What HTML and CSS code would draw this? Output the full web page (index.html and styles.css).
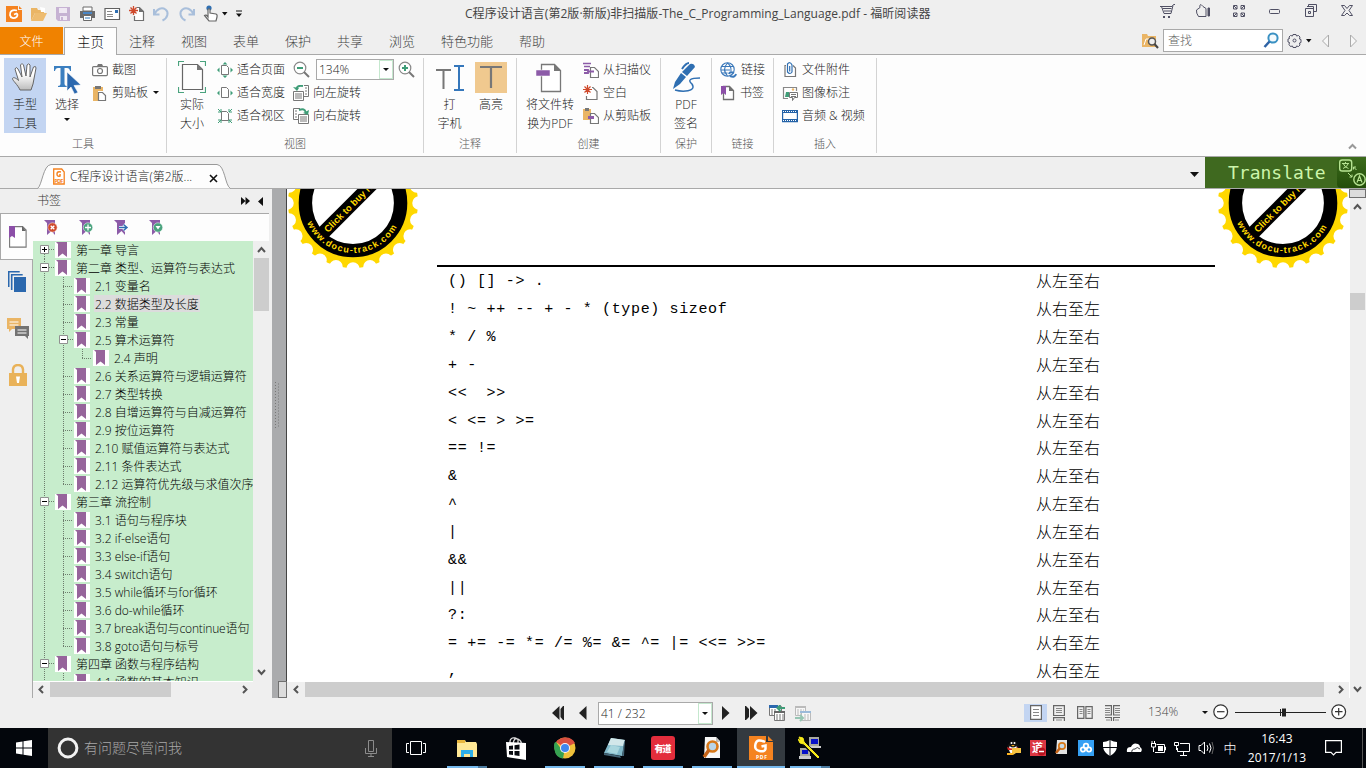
FILE: index.html
```html
<!DOCTYPE html>
<html lang="zh-CN">
<head>
<meta charset="utf-8">
<title>C程序设计语言 - 福昕阅读器</title>
<link rel="stylesheet" href="styles.css">
</head>
<body>
<svg class="defs" width="0" height="0">
  <defs>
    <!-- tree guides -->
    <symbol id="g-v" viewBox="0 0 19 18"><path class="dot" d="M9.5 0V18"/></symbol>
    <symbol id="g-t" viewBox="0 0 19 18"><path class="dot" d="M9.5 0V18M9 9.5H19"/></symbol>
    <symbol id="g-l" viewBox="0 0 19 18"><path class="dot" d="M9.5 0V9M9 9.5H19"/></symbol>
    <symbol id="g-plus" viewBox="0 0 19 18"><path class="dot" d="M9.5 13V18M14 8.5H19"/><path d="M5.500 4.500h8v8h-8z" fill="#fff" stroke="#919191"/><path d="M7 8.500h5M9.500 6v5" stroke="#000"/></symbol>
    <symbol id="g-minus" viewBox="0 0 19 18"><path class="dot" d="M9.500 0V18M14 8.500H19"/><path d="M5.500 4.500h8v8h-8z" fill="#fff" stroke="#919191"/><path d="M7 8.500h5" stroke="#000"/></symbol>
    <symbol id="bm" viewBox="0 0 16 18"><path d="M0 1h16v16H0z" fill="#fff"/><path d="M1 1h11v15L7.500 12.500 3 16V3z" fill="#96649b"/></symbol>
    <symbol id="page" viewBox="0 0 16 16"><path d="M3.500 1.500h6l4 4v9h-10z" fill="#fff" stroke="#707070" stroke-width="1.300"/><path d="M9 1v5h5" fill="#707070"/></symbol>
    <symbol id="flag" viewBox="0 0 17 17"><path d="M1 1h11v15l-3.500-4L4 16V4z" fill="#8c5ba8"/></symbol>
    <symbol id="gear24" viewBox="-65 -14 130 80">
      <circle r="65" fill="#ffd800"/>
      <circle r="66" fill="none" stroke="#fff" stroke-width="13.500" stroke-linecap="round" pathLength="24" stroke-dasharray="0 1"/>
      <circle r="47.600" fill="#fff" stroke="#000" stroke-width="13.400"/>
      <g transform="rotate(-45)">
        <path d="M-44-6.800h88v13.600h-88z"/>
        <text class="seal" x="-39" y="3.500" font-size="9.500" textLength="84">Click to buy NOW!</text>
      </g>
      <path id="arc" d="M-45.800 20A50 50 0 0 0 45.800 20" fill="none"/>
      <text class="seal" font-size="9" textLength="111"><textPath href="#arc" textLength="111">www.docu-track.com</textPath></text>
    </symbol>
  </defs>
</svg>

<header class="titlebar">
  <div class="quick">
    <svg width="16" height="16"><path d="M0 0h12v4h4v12H0z" fill="#f5821f"/><path d="M13 0l3 3h-3z" fill="#f5821f"/><path d="M11 4.500C6 3 3.500 6 4 9s4 4 6.500 2c1.500-1.500 1-3 0-3.500L8 8.500" fill="none" stroke="#fff" stroke-width="1.800"/></svg>
    <svg width="18" height="16"><path d="M1 2h6l1 2h6v3H5l-4 8z" fill="#eab565"/><path d="M5 7h12l-4 8H1z" fill="#eebc70"/><path d="M10 1l5 1v4h-4z" fill="#fff"/></svg>
    <svg width="15" height="16"><path d="M0 1h14v14H2l-2-2z" fill="#c6b2d3"/><path d="M3 2h8v5H3zM4 10h7v4H4z" fill="#efe8f3"/><path d="M5 11h2v3H5z" fill="#c6b2d3"/></svg>
    <svg width="17" height="16"><path d="M4 1h9v4H4z" fill="#fff" stroke="#6a6a6a"/><path d="M1 5h15v7H1z" fill="#6a6a6a"/><path d="M4 6h9v2H4z" fill="#4a86c5"/><path d="M4.500 9.500h8v5h-8z" fill="#fff" stroke="#6a6a6a"/><path d="M6 12h5" stroke="#2f77b8"/></svg>
    <svg width="17" height="16"><path d="M1 2.500h14.500v11H1z" fill="#fff" stroke="#606060" stroke-width="1.200"/><path d="M3 5.500h5M3 8.500h6M3 10.500h6" stroke="#888"/><path d="M11 4h3v3h-3z" fill="#2f6fb2"/></svg>
    <svg width="16" height="16"><path d="M7.500 1.500h3l4 4v9h-9V10" fill="#fff" stroke="#707070" stroke-width="1.200"/><path d="M10 1v5h5z" fill="#707070"/><path d="M4.500 0v9M0 4.500h9M1.500 1.500l6 6M7.500 1.500l-6 6" stroke="#cf4a2c" stroke-width="1.300"/></svg>
    <svg width="17" height="16"><path d="M1 3v5.500h5.500" fill="none" stroke="#a9bfdb" stroke-width="2"/><path d="M1.500 8C4 2.500 9 1 12.500 3.500S15 12 9.500 14.500" fill="none" stroke="#a9bfdb" stroke-width="2"/></svg>
    <svg width="17" height="16"><path d="M16 3v5.500h-5.500" fill="none" stroke="#a9bfdb" stroke-width="2"/><path d="M15.500 8C13 2.500 8 1 4.500 3.500S2 12 7.500 14.500" fill="none" stroke="#a9bfdb" stroke-width="2"/></svg>
    <svg width="16" height="17"><circle cx="6" cy="3" r="2.600" fill="#2f6fb2"/><path d="M5 10V4.500q1-1.500 2 0V8l6 1q1.500.5 1 3l-1 4H6L1.500 10.500Q3 9 5 12z" fill="#fff" stroke="#666" stroke-width="1.200"/></svg>
    <svg class="tight" width="6" height="4"><path d="M0 0h5.500L2.750 3.500z" fill="#111"/></svg>
    <svg width="6" height="8"><path d="M0 1h6" stroke="#111"/><path d="M0 3.500h6L3 7z" fill="#111"/></svg>
  </div>
  <div class="apptitle">C程序设计语言(第2版·新版)非扫描版-The_C_Programming_Language.pdf - 福昕阅读器</div>
  <div class="winbtns">
    <svg width="16" height="16" fill="none" stroke="#505064"><path d="M1 3.500h12l1.500-2H16M2.500 3.500l2.500 7h7l2-8M3.500 5.500h9M5 8h7"/><path d="M4 13h2v2H4zM9 13h2v2H9z" fill="#505064" stroke="none"/></svg>
    <svg width="16" height="16" fill="none" stroke="#505064"><path d="M3.500 13.500Q1 10 1.500 7L5 4.500Q4 2 6 1.500l2 2 3 2v8z"/><path d="M13 5h1.500v8H13z" fill="#505064"/></svg>
    <svg width="16" height="16" fill="none" stroke="#505064"><path d="M2.500 2.500H6V6H2.500zM10 2.500h3.500V6H10zM2.500 10H6v3.500H2.500zM10 10h3.500v3.500H10zM3 3l3 3M13 3l-3 3M3 13l3-3M13 13l-3-3"/></svg>
    <svg width="16" height="16" fill="none" stroke="#505064"><rect x="2.500" y="6.500" width="10" height="4" rx="1"/></svg>
    <svg width="16" height="16" fill="none" stroke="#505064"><path d="M5.500 4V1.500h8v7H11M2.500 5.500h8v8h-8zM5.500 8.500h2v2h-2z"/><path d="M4 3.500h6.500V10"/></svg>
    <svg width="16" height="16" fill="none" stroke="#505064"><path d="M2.500 2.500h3l2.500 3 2.500-3h3l-3.500 5 3.500 5h-3L8 10l-2.500 2.500h-3l3.500-5z"/></svg>
  </div>
</header>

<nav class="tabs">
  <span class="file">文件</span><span class="tab on">主页</span>
  <span class="tab">注释</span><span class="tab">视图</span><span class="tab">表单</span><span class="tab">保护</span><span class="tab">共享</span><span class="tab">浏览</span><span class="tab wide">特色功能</span><span class="tab">帮助</span>
  <div class="find">
    <svg width="17" height="16"><path d="M0 1h5l1 2h8v11H0z" fill="#eab565"/><path d="M2 12l2-6h9" stroke="#fff" fill="none"/><circle cx="10" cy="8.500" r="3.500" fill="#efefef" stroke="#555" stroke-width="1.500"/><path d="M12.500 11l3.500 4" stroke="#444" stroke-width="2"/></svg>
    <div class="searchbox"><span>查找</span><svg width="16" height="17"><circle cx="10" cy="6" r="4.600" fill="#f4fafd" stroke="#3a91c3" stroke-width="2"/><path d="M6.500 9.500L1.500 15" stroke="#2e63a5" stroke-width="2.500"/></svg></div>
    <svg width="15" height="15" fill="none" stroke="#505064"><path d="M6 1.500h3l.5 1.500 2-.5 1.500 1.500-.5 2 1.500.5v3l-1.500.5.500 2-1.500 1.500-2-.5-.5 1.500H6l-.5-1.500-2 .5L2 11.500l.5-2L1 9V6l1.500-.5L2 4l1.500-1.500 2 .5z"/><circle cx="7.500" cy="7.500" r="1.500"/></svg>
    <svg class="c1" width="6" height="4"><path d="M0 0h5.500L2.750 3.500z" fill="#111"/></svg>
    <svg class="c2" width="9" height="14"><path d="M7.500 1v12l-6-6z" fill="#f7f7f7" stroke="#aaa"/></svg>
    <svg class="c3" width="9" height="14"><path d="M1.500 1v12l6-6z" fill="#f7f7f7" stroke="#aaa"/></svg>
  </div>
</nav>

<section class="ribbon">
  <div class="grp g-tools">
    <div class="cmds">
      <div class="big sel"><svg width="28" height="32"><defs><linearGradient id="hg" x2="0" y2="1"><stop offset=".4" stop-color="#fff"/><stop offset="1" stop-color="#bcbcbc"/></linearGradient></defs><path d="M9 28C7 23 1 18 1.500 16.500s3-1 6 2L4 7q1-3 3 0l4 8L9.500 3q1.500-3 3 0L15 14l1-11q2-2.500 3 0v12l3.500-10q2.500-1.500 2.500 1L22 22l-2 6z" fill="url(#hg)" stroke="#666" stroke-width="1"/></svg><span>手型</span><span>工具</span></div>
      <div class="big"><svg width="28" height="32"><path d="M1 4h17v5h-1q-.5-3-3-3h-2.500v16q0 2 2.500 2v1H5v-1q2.500 0 2.500-2V6H5Q2.500 6 2 9H1z" fill="#3b7fc0"/><path d="M14 10l14 13-7 .5 4 7-3.500 1.500-3.500-7-4 4z" fill="#2b68ae" stroke="#fdfdfd" stroke-width=".6"/></svg><span>选择</span><i class="dn"></i></div>
      <div class="col">
        <div class="cmd"><svg width="16" height="16"><rect x=".6" y="4.600" width="14.800" height="9" rx="1" fill="#fff" stroke="#777" stroke-width="1.200"/><path d="M5 4l1-2h4l1 2z" fill="#777"/><circle cx="8" cy="9" r="2.500" fill="none" stroke="#777" stroke-width="1.200"/></svg>截图</div>
        <div class="cmd"><svg width="16" height="16"><path d="M1 2h10v4H6v10H1z" fill="#eab565"/><path d="M3 1h6v3H3z" fill="#777"/><path d="M6.500 7.500h4l3 3v5h-7z" fill="#fff" stroke="#777" stroke-width="1.200"/></svg>剪贴板<i class="dn"></i></div>
      </div>
    </div><div class="glabel">工具</div>
  </div>
  <div class="grp g-view">
    <div class="cmds">
      <div class="big"><svg width="28" height="32" fill="none"><path d="M.5 5V.5H6M22 .5h5.500V5M.5 26v5.500H6M22 31.500h5.500V26" stroke="#4aa37e" stroke-width="1.200"/><path d="M4.500 3.500h15l5 5v20h-20z" stroke="#666" stroke-width="1.200"/><path d="M19 3v6h6z" fill="#777"/></svg><span>实际</span><span>大小</span></div>
      <div class="col">
        <div class="cmd"><svg width="16" height="16"><path d="M4.500 3.500h5l2 2v7h-7z" fill="#fff" stroke="#777"/><path d="M8 0l2.500 2.500h-5zM8 16l2.500-2.500h-5zM0 8l2.500-2.500v5zM16 8l-2.500-2.500v5z" fill="#3f9d78"/></svg>适合页面</div>
        <div class="cmd"><svg width="16" height="16"><path d="M4.500 2.500h5l2 2v8h-7z" fill="#fff" stroke="#777"/><path d="M0 8l2.500-2.500v5zM16 8l-2.500-2.500v5z" fill="#3f9d78"/></svg>适合宽度</div>
        <div class="cmd"><svg width="16" height="16"><path d="M4.500 3.500h5l2 2v7h-7z" fill="#fff" stroke="#777"/><path d="M1 1l3 3M1 4h3V1M15 1l-3 3M15 4h-3V1M1 15l3-3M1 12h3v3M15 15l-3-3M15 12h-3v3" stroke="#3f9d78" fill="none"/></svg>适合视区</div>
      </div>
      <div class="col zoomcol">
        <div class="cmd zrow"><svg width="17" height="17"><circle cx="7" cy="7" r="5.800" fill="#fff" stroke="#888" stroke-width="1.200"/><path d="M4 7h6" stroke="#3f9d78" stroke-width="2"/><path d="M11 11l5 5" stroke="#777" stroke-width="2"/></svg><div class="combo"><span>134%</span><b><i class="dn"></i></b></div><svg width="17" height="17"><circle cx="7" cy="7" r="5.800" fill="#fff" stroke="#888" stroke-width="1.200"/><path d="M4 7h6M7 4v6" stroke="#3f9d78" stroke-width="2"/><path d="M11 11l5 5" stroke="#777" stroke-width="2"/></svg></div>
        <div class="cmd"><svg width="16" height="16"><path d="M11 .5h4.500v11H11M.5 6.500h10v9H.500z" fill="#fff" stroke="#777"/><path d="M2 9h7M2 11h7M2 13h7M12 3h2M12 6h2M12 9h2" stroke="#777"/><path d="M10 1Q4 0 3.500 4" fill="none" stroke="#3f9d78" stroke-width="2"/><path d="M0 2l6 1-2 3z" fill="#3f9d78"/></svg>向左旋转</div>
        <div class="cmd"><svg width="16" height="16"><path d="M5 11.500H.500V.500H7M5.500 6.500h10v9h-10z" fill="#fff" stroke="#777"/><path d="M7 9h7M7 11h7M7 13h7M2 3h2M2 6h2M2 9h2" stroke="#777"/><path d="M6 2Q12 0 12.500 4" fill="none" stroke="#3f9d78" stroke-width="2"/><path d="M16 2l-1 5-5-2z" fill="#3f9d78"/></svg>向右旋转</div>
      </div>
    </div><div class="glabel">视图</div>
  </div>
  <div class="grp g-note">
    <div class="cmds">
      <div class="big"><svg width="28" height="32"><path d="M0 8h15M7.500 8v19" stroke="#777" stroke-width="2"/><path d="M18 4h10M18 28h10M23 4v24" stroke="#3577bb" stroke-width="2"/></svg><span>打</span><span>字机</span></div>
      <div class="big hl"><svg width="32" height="32"><path d="M0 0h32v31H0z" fill="#f0c98f"/><path d="M5 5h22M16 5v21" stroke="#777" stroke-width="2.200"/></svg><span>高亮</span></div>
    </div><div class="glabel">注释</div>
  </div>
  <div class="grp g-create">
    <div class="cmds">
      <div class="big"><svg width="28" height="32"><path d="M5.500 2.500h13l6 6v21h-19z" fill="#fff" stroke="#777" stroke-width="1.300"/><path d="M18 2l7 7h-7z" fill="#777"/><path d="M0 8h14v6H0z" fill="#8c5ba8" stroke="#fff" stroke-width=".5"/></svg><span>将文件转</span><span>换为PDF</span></div>
      <div class="col">
        <div class="cmd"><svg width="16" height="16"><path d="M7.500 5.500h4l4 4v6h-8z" fill="#fff" stroke="#777" stroke-width="1.200"/><path d="M0 1.500h8M1 4.500h6" stroke="#8c5ba8" stroke-width="1.300"/><path d="M1 8h4v3H1M5 9.500h6" stroke="#8c5ba8" stroke-width="1.800" fill="none"/></svg>从扫描仪</div>
        <div class="cmd"><svg width="16" height="16"><path d="M9 2.500h1l4 4v8H3.500V11" fill="#fff" stroke="#777" stroke-width="1.200"/><path d="M4.500 0v9M0 4.500h9M1.500 1.500l6 6M7.500 1.500l-6 6" stroke="#cf4a2c" stroke-width="1.200"/></svg>空白</div>
        <div class="cmd"><svg width="16" height="16"><path d="M0 1h8v11H0z" fill="#eab565"/><path d="M7.500 5.500h4l4 4v6h-8z" fill="#fff" stroke="#777" stroke-width="1.200"/><path d="M2 0h4v3H2z" fill="#777"/><path d="M5 8h6v3H5z" fill="#8c5ba8"/></svg>从剪贴板</div>
      </div>
    </div><div class="glabel">创建</div>
  </div>
  <div class="grp g-sign">
    <div class="cmds">
      <div class="big"><svg width="30" height="33"><path d="M11 8q4-6 7-6" stroke="#2f6fb2" stroke-width="2" fill="none"/><path d="M19 3q4-1 5 3l-8 9-5-4zM10 12l5 4-6 7-7 5 2-7z" fill="#2f6fb2"/><path d="M29 17q-15 0-8 6c5 8-10 8-17 6" fill="none" stroke="#2f6fb2" stroke-width="1.500"/></svg><span>PDF</span><span>签名</span></div>
    </div><div class="glabel">保护</div>
  </div>
  <div class="grp g-link">
    <div class="cmds"><div class="col">
      <div class="cmd"><svg width="17" height="16" fill="none" stroke="#3a78ba" stroke-width="1.100"><circle cx="7.500" cy="7.500" r="6.700"/><path d="M1.500 4.500h12M1 8h9M1.500 11h6M7.500 1q-6 6.500 0 13M7.500 1q4 3 3.500 8"/><path d="M9 12q1-3 5-1M16 12q-1 4-6 2" stroke-width="2"/></svg>链接</div>
      <div class="cmd"><svg width="16" height="16"><use href="#page"/><path d="M1 1h5v9L3.500 8 1 10z" fill="#8c4fa8"/></svg>书签</div>
    </div></div><div class="glabel">链接</div>
  </div>
  <div class="grp g-ins">
    <div class="cmds"><div class="col">
      <div class="cmd"><svg width="16" height="16"><path d="M4 3.500H3v11h10.500V6L11 3.500" fill="#fff" stroke="#777" stroke-width="1.200"/><path d="M5.500 5v5q2.500 3 4.500 0V3Q8-1 5.500 2v3M7.700 4v5.500" fill="none" stroke="#2f6fb2" stroke-width="1.200"/></svg>文件附件</div>
      <div class="cmd"><svg width="16" height="16"><path d="M6 13.500H1.500v-11h13V6" fill="#fff" stroke="#888" stroke-width="1.200"/><path d="M3 12l1-5h3v5z" fill="#3f9d78"/><circle cx="11" cy="4.500" r="1.200" fill="#eab565"/><path d="M7.500 7.500h8v5h-3l-2 3v-3h-3z" fill="#fff" stroke="#777"/><path d="M9 9.500h5M9 11.500h5" stroke="#777"/></svg>图像标注</div>
      <div class="cmd"><svg width="16" height="16"><path d="M.6 2.600h14.800v11H.600z" fill="#fff" stroke="#2563a8" stroke-width="1.200"/><path d="M0 3.500h16M0 12.500h16" stroke="#2563a8" stroke-width="3"/><path d="M1 3.500h14M1 12.500h14" stroke="#fff" stroke-dasharray="1 1"/></svg>音频 &amp; 视频</div>
    </div></div><div class="glabel">插入</div>
  </div>
  <svg class="collapse" width="9" height="7"><path d="M1 5.500l3.500-3.500L8 5.500" fill="none" stroke="#999" stroke-width="2"/></svg>
</section>

<section class="doctabs">
  <div class="doctab">
    <svg class="shape" width="194" height="25"><path d="M.500 24.500C5 22 6 1 14 .500H180C188 1 188 22 193.500 24.500" fill="#fdfdfd" stroke="#999"/></svg>
    <svg class="ico" width="12" height="17"><path d="M.700 1h8l2.500 3v12H.700z" fill="#fff" stroke="#f5821f" stroke-width="1.300"/><path d="M8 4q-4-1-4 2t3 2V6" fill="none" stroke="#f5821f" stroke-width="1.500"/><text x="1.200" y="14.500" font-size="5.500" font-weight="bold" fill="#f5821f" textLength="9">PDF</text></svg>
    <span>C程序设计语言(第2版...</span>
    <svg class="x" width="9" height="9"><path d="M1 1l7 7M8 1L1 8" stroke="#111" stroke-width="1.600"/></svg>
  </div>
  <svg class="more" width="9" height="5"><path d="M0 0h9L4.500 5z" fill="#111"/></svg>
  <div class="translate"><span>Translate</span>
    <svg width="29" height="31"><defs><linearGradient id="tg" x2="0" y2="1"><stop stop-color="#3c6b1c"/><stop offset="1" stop-color="#234d0a"/></linearGradient></defs><path d="M4 0h25v31H4q-4 0-4-4V4q0-4 4-4z" fill="url(#tg)"/><g fill="none" stroke="#b6e392"><rect x="2.700" y="3" width="12" height="11" rx="2.500" stroke-width="1.400"/><path d="M5 6.500h7M8.500 5v1.500M6.500 7q1 3 5 4.500M11 7q-1 3-5 4.500" /><circle cx="22.500" cy="22.500" r="5.700" stroke-width="1.400"/><path d="M20 25.500l2.500-6.500 2.500 6.500M21 23.500h3" stroke-width="1.200"/><path d="M16.500 10l3 3M16.500 12.500V10H19M11 16l4 4M15 17.500V20h-2.500"/></g></svg>
  </div>
</section>

<main class="work">
  <aside class="side">
    <div class="shead"><span>书签</span><svg width="26" height="9"><path d="M0 0l4.500 4L0 8zM4.500 0L9 4 4.500 8zM22 0v9l-5-4.500z" fill="#111"/></svg></div>
    <div class="sbody">
      <div class="rail">
        <div class="cur"><svg width="18" height="22"><path d="M.600.600h13l3.500 3.500v17H.600z" fill="#fff" stroke="#777" stroke-width="1.100"/><path d="M0 0h6v12l-3-2-3 2z" fill="#8c4fa8"/><path d="M13 0v5h4z" fill="#666"/></svg></div>
        <svg class="r1" width="19" height="22"><path d="M.700 16V.700h11M3.700 19V3.700h11" fill="none" stroke="#2b68ae" stroke-width="1.600"/><path d="M6 6h12v15H6z" fill="#2b68ae"/></svg>
        <svg class="r2" width="22" height="22"><path d="M0 1h14v11H5l-3 3v-3H0z" fill="#eab565"/><path d="M2.500 5h9M2.500 8h9" stroke="#fff" stroke-width="1.200"/><path d="M8 9h14v10h-1v3l-3-3H8z" fill="#737373"/><path d="M10.500 13h9M10.500 16h9" stroke="#fff" stroke-width="1.200"/></svg>
        <svg class="r3" width="18" height="22"><path d="M4 10V5.500Q4.500 1 9 1t5 4.500V10" fill="none" stroke="#e9b259" stroke-width="2.400"/><path d="M0 9h18v13H0z" fill="#e9b259"/><path d="M7 12.500h4L10 19H8z" fill="#fff"/></svg>
      </div>
      <div class="panel">
        <div class="ptools">
          <svg width="17" height="17"><use href="#flag"/><circle cx="9.500" cy="8.500" r="4.700" fill="#cf4a2c" stroke="#fff" stroke-width=".5"/><path d="M7.700 6.700l3.600 3.600M11.300 6.700L7.700 10.300" stroke="#fff" stroke-width="1.300"/></svg>
          <svg width="17" height="17"><use href="#flag"/><circle cx="10" cy="8.500" r="4.700" fill="#4aa37e" stroke="#fff" stroke-width=".5"/><path d="M7 8.500h6M10 5.500v6" stroke="#fff" stroke-width="1.300"/></svg>
          <svg width="17" height="17"><use href="#flag"/><path d="M6 8.500h7M10.500 5.500l3.500 3-3.500 3" fill="none" stroke="#fff" stroke-width="3"/><path d="M6 8.500h7M10.500 5.500l3.500 3-3.500 3" fill="none" stroke="#2f6fb2" stroke-width="1.500"/></svg>
          <svg width="17" height="17"><use href="#flag"/><circle cx="10" cy="8.500" r="4.700" fill="#4aa37e" stroke="#fff" stroke-width=".5"/><path d="M7.500 7h5L10 10.500z" fill="#fff"/></svg>
        </div>
        <div class="treewrap">
          <div class="tree">
            <div class="row"><svg class="g"><use href="#g-plus"/></svg><svg class="b"><use href="#bm"/></svg><span>第一章 导言</span></div>
            <div class="row"><svg class="g"><use href="#g-minus"/></svg><svg class="b"><use href="#bm"/></svg><span>第二章 类型、运算符与表达式</span></div>
            <div class="row"><svg class="g"><use href="#g-v"/></svg><svg class="g"><use href="#g-t"/></svg><svg class="b"><use href="#bm"/></svg><span>2.1 变量名</span></div>
            <div class="row"><svg class="g"><use href="#g-v"/></svg><svg class="g"><use href="#g-t"/></svg><svg class="b"><use href="#bm"/></svg><span class="picked">2.2 数据类型及长度</span></div>
            <div class="row"><svg class="g"><use href="#g-v"/></svg><svg class="g"><use href="#g-t"/></svg><svg class="b"><use href="#bm"/></svg><span>2.3 常量</span></div>
            <div class="row"><svg class="g"><use href="#g-v"/></svg><svg class="g"><use href="#g-minus"/></svg><svg class="b"><use href="#bm"/></svg><span>2.5 算术运算符</span></div>
            <div class="row"><svg class="g"><use href="#g-v"/></svg><svg class="g"><use href="#g-v"/></svg><svg class="g"><use href="#g-l"/></svg><svg class="b"><use href="#bm"/></svg><span>2.4 声明</span></div>
            <div class="row"><svg class="g"><use href="#g-v"/></svg><svg class="g"><use href="#g-t"/></svg><svg class="b"><use href="#bm"/></svg><span>2.6 关系运算符与逻辑运算符</span></div>
            <div class="row"><svg class="g"><use href="#g-v"/></svg><svg class="g"><use href="#g-t"/></svg><svg class="b"><use href="#bm"/></svg><span>2.7 类型转换</span></div>
            <div class="row"><svg class="g"><use href="#g-v"/></svg><svg class="g"><use href="#g-t"/></svg><svg class="b"><use href="#bm"/></svg><span>2.8 自增运算符与自减运算符</span></div>
            <div class="row"><svg class="g"><use href="#g-v"/></svg><svg class="g"><use href="#g-t"/></svg><svg class="b"><use href="#bm"/></svg><span>2.9 按位运算符</span></div>
            <div class="row"><svg class="g"><use href="#g-v"/></svg><svg class="g"><use href="#g-t"/></svg><svg class="b"><use href="#bm"/></svg><span>2.10 赋值运算符与表达式</span></div>
            <div class="row"><svg class="g"><use href="#g-v"/></svg><svg class="g"><use href="#g-t"/></svg><svg class="b"><use href="#bm"/></svg><span>2.11 条件表达式</span></div>
            <div class="row"><svg class="g"><use href="#g-v"/></svg><svg class="g"><use href="#g-l"/></svg><svg class="b"><use href="#bm"/></svg><span>2.12 运算符优先级与求值次序</span></div>
            <div class="row"><svg class="g"><use href="#g-minus"/></svg><svg class="b"><use href="#bm"/></svg><span>第三章 流控制</span></div>
            <div class="row"><svg class="g"><use href="#g-v"/></svg><svg class="g"><use href="#g-t"/></svg><svg class="b"><use href="#bm"/></svg><span>3.1 语句与程序块</span></div>
            <div class="row"><svg class="g"><use href="#g-v"/></svg><svg class="g"><use href="#g-t"/></svg><svg class="b"><use href="#bm"/></svg><span>3.2 if-else语句</span></div>
            <div class="row"><svg class="g"><use href="#g-v"/></svg><svg class="g"><use href="#g-t"/></svg><svg class="b"><use href="#bm"/></svg><span>3.3 else-if语句</span></div>
            <div class="row"><svg class="g"><use href="#g-v"/></svg><svg class="g"><use href="#g-t"/></svg><svg class="b"><use href="#bm"/></svg><span>3.4 switch语句</span></div>
            <div class="row"><svg class="g"><use href="#g-v"/></svg><svg class="g"><use href="#g-t"/></svg><svg class="b"><use href="#bm"/></svg><span>3.5 while循环与for循环</span></div>
            <div class="row"><svg class="g"><use href="#g-v"/></svg><svg class="g"><use href="#g-t"/></svg><svg class="b"><use href="#bm"/></svg><span>3.6 do-while循环</span></div>
            <div class="row"><svg class="g"><use href="#g-v"/></svg><svg class="g"><use href="#g-t"/></svg><svg class="b"><use href="#bm"/></svg><span class="narrow">3.7 break语句与continue语句</span></div>
            <div class="row"><svg class="g"><use href="#g-v"/></svg><svg class="g"><use href="#g-l"/></svg><svg class="b"><use href="#bm"/></svg><span>3.8 goto语句与标号</span></div>
            <div class="row"><svg class="g"><use href="#g-minus"/></svg><svg class="b"><use href="#bm"/></svg><span>第四章 函数与程序结构</span></div>
            <div class="row"><svg class="g"><use href="#g-v"/></svg><svg class="g"><use href="#g-t"/></svg><svg class="b"><use href="#bm"/></svg><span>4.1 函数的基本知识</span></div>
          </div>
          <div class="vbar"><svg width="15" height="17"><path d="M4 11l3.500-4L11 11" fill="none" stroke="#555" stroke-width="2"/></svg><div class="thumb"></div><svg class="end" width="15" height="17"><path d="M4 6l3.500 4L11 6" fill="none" stroke="#555" stroke-width="2"/></svg></div>
        </div>
        <div class="hbar"><svg width="17" height="15"><path d="M10 4L6.500 7.500 10 11" fill="none" stroke="#555" stroke-width="2"/></svg><div class="thumb"></div><svg class="end" width="17" height="15"><path d="M7 4l3.500 3.500L7 11" fill="none" stroke="#555" stroke-width="2"/></svg></div>
      </div>
    </div>
  </aside>
  <div class="splitter"><svg width="6" height="46"><path d="M1.500 0v46M4.500 1.500v44" stroke="#777" stroke-dasharray="1 2"/></svg><div class="splitbox"></div></div>
  <div class="viewer">
    <div class="page">
      <svg class="stamp" width="130" height="80"><use href="#gear24"/></svg>
      <div class="ops">
        <div><code>() [] -&gt; .</code><span>从左至右</span></div>
        <div><code>! ~ ++ -- + - * (type) sizeof</code><span>从右至左</span></div>
        <div><code>* / %</code><span>从左至右</span></div>
        <div><code>+ -</code><span>从左至右</span></div>
        <div><code>&lt;&lt;&nbsp; &gt;&gt;</code><span>从左至右</span></div>
        <div><code>&lt; &lt;= &gt; &gt;=</code><span>从左至右</span></div>
        <div><code>== !=</code><span>从左至右</span></div>
        <div><code>&amp;</code><span>从左至右</span></div>
        <div><code>^</code><span>从左至右</span></div>
        <div><code>|</code><span>从左至右</span></div>
        <div><code>&amp;&amp;</code><span>从左至右</span></div>
        <div><code>||</code><span>从左至右</span></div>
        <div><code>?:</code><span>从左至右</span></div>
        <div><code>= += -= *= /= %= &amp;= ^= |= &lt;&lt;= &gt;&gt;=</code><span>从右至左</span></div>
        <div><code>,</code><span>从右至左</span></div>
      </div>
      <svg class="stamp" width="130" height="80"><use href="#gear24"/></svg>
    </div>
    <div class="hbar wide"><svg width="17" height="15"><path d="M10 4L6.500 7.500 10 11" fill="none" stroke="#555" stroke-width="2"/></svg><div class="thumb"></div><svg class="end" width="17" height="15"><path d="M7 4l3.500 3.500L7 11" fill="none" stroke="#555" stroke-width="2"/></svg></div>
  </div>
  <div class="vbar right"><div class="splitbox"></div><svg width="15" height="17"><path d="M4 11l3.500-4L11 11" fill="none" stroke="#555" stroke-width="2"/></svg><div class="thumb"></div><svg class="end" width="15" height="17"><path d="M4 6l3.500 4L11 6" fill="none" stroke="#555" stroke-width="2"/></svg></div>
</main>

<footer class="status">
  <div class="pager">
    <svg width="13" height="14"><path d="M7.500 0v14L0 7zM12 0v14h-1L8.500 11V3L11 0z" fill="#222"/></svg>
    <svg class="p2" width="8" height="14"><path d="M7.500 0v14L0 7z" fill="#222"/></svg>
    <div class="combo pg"><span>41 / 232</span><b><i class="dn"></i></b></div>
    <svg class="p3" width="8" height="14"><path d="M0 0v14l7.500-7z" fill="#222"/></svg>
    <svg class="p4" width="13" height="14"><path d="M0 0h1l3 3v8l-3 3H0zM5 0v14l7.500-7z" fill="#222"/></svg>
    <svg class="p5" width="17" height="17"><path d="M.500 1.500h12v9H.500z" fill="#fff" stroke="#777"/><path d="M0 1.500h9" stroke="#2b68ae" stroke-width="3"/><path d="M2 5h6M2 7h4M2 9h4" stroke="#777" stroke-dasharray="2 1"/><path d="M5.500 6.500h10v9h-10z" fill="#fff" stroke="#777"/><path d="M5 7h11" stroke="#666" stroke-width="2"/><path d="M7 10h8M7 12h8M7 14h8" stroke="#777" stroke-dasharray="2 1"/><path d="M16 3H9M11.500 0L8.500 3l3 3" fill="none" stroke="#3f9d78" stroke-width="2"/></svg>
    <svg class="p6" width="17" height="17" opacity=".5"><path d="M.500 1.500h10v9H.500z" fill="#fff" stroke="#888"/><path d="M0 2h11" stroke="#888" stroke-width="2"/><path d="M2 5h7M2 7h7M2 9h4" stroke="#888" stroke-dasharray="2 1"/><path d="M6.500 6.500h9v9h-9z" fill="#fff" stroke="#888"/><path d="M5 7h11" stroke="#4a86c5" stroke-width="2"/><path d="M9 10h6M9 12h6M9 14h6" stroke="#888" stroke-dasharray="2 1"/><path d="M0 13h7M5 10l3 3-3 3" fill="none" stroke="#3f9d78" stroke-width="2"/></svg>
  </div>
  <div class="modes">
    <span class="m on"><svg width="12" height="15"><path d="M.600.600h10.800v13.800H.600z" fill="#fff" stroke="#666" stroke-width="1.200"/><path d="M3 4.500h6M3 7.500h6M3 10.500h6" stroke="#888"/></svg></span>
    <svg width="12" height="16"><path d="M.600.600h10.800v9.900H.600zM.600 16v-3.400h10.800V16" fill="none" stroke="#666" stroke-width="1.200"/><path d="M3 3.500h6M3 5.500h6M3 7.500h6M3 15h6" stroke="#888"/></svg>
    <svg width="16" height="13"><path d="M.600.600h6.300v11.800H.600zM8.900.600h6.300v11.800H8.900z" fill="none" stroke="#666" stroke-width="1.200"/><path d="M2.500 3.500h3M2.500 5.500h3M2.500 7.500h3M10.500 3.500h3M10.500 5.500h3M10.500 7.500h3" stroke="#888"/></svg>
    <svg width="16" height="16"><path d="M0 .600h6.400v9.400H0M15 .600H8.600v9.400H15M0 12.500h6.400V16M15 12.500H8.600V16" fill="none" stroke="#666" stroke-width="1.200"/><path d="M0 3.500h5M0 5.500h5M0 7.500h5M10 3.500h5M10 5.500h5M10 7.500h5M1 15h4M10 15h4" stroke="#888"/></svg>
  </div>
  <div class="zoom"><span>134%</span><i class="dn"></i>
    <svg width="16" height="16" fill="#fff" stroke="#333" stroke-width="1.200"><circle cx="7.700" cy="7.700" r="6.900"/><path d="M4 7.700h7.500"/></svg>
    <svg class="sl" width="91" height="9"><path d="M0 4.500h91M45.500 1v7" stroke="#222"/><path d="M47 .500h4v8h-4z" fill="#222"/></svg>
    <svg width="16" height="16" fill="#fff" stroke="#333" stroke-width="1.200"><circle cx="7.700" cy="7.700" r="6.900"/><path d="M4 7.700h7.500M7.700 4v7.500"/></svg>
  </div>
</footer>

<div class="taskbar">
  <div class="start"><svg width="16" height="16"><path d="M0 2.500L6.500 1.500v6H0zM7.500 1.300L16 0v7.500H7.500zM0 8.500h6.500v6L0 13.500zM7.500 8.500H16V16l-8.500-1.300z" fill="#fff"/></svg></div>
  <div class="ask"><svg width="22" height="22"><circle cx="11" cy="11" r="8.900" fill="none" stroke="#f2f2f2" stroke-width="3"/></svg><span>有问题尽管问我</span><svg class="mic" width="12" height="17" fill="none" stroke="#8c8c8c"><path d="M3.500.500h5v11h-5zM.500 8v5.500h11V8M6 14v2.500M3 16.500h6"/></svg></div>
  <div class="apps">
    <div class="app tv"><svg width="20" height="14" fill="none" stroke="#fff"><path d="M4.500.500h11v13h-11zM3 2.500H.500v9H3M17 2.500h2.500v9H17"/></svg></div>
    <div class="app run multi"><svg width="22" height="19"><path d="M1 1h8l1 2h10l1 2v13H1z" fill="#ffe795"/><path d="M1 1h8v3H1z" fill="#e9b63d"/><path d="M5 18v-7h12v7h-3v-3H8v3z" fill="#2eaee8"/></svg></div>
    <div class="app"><svg width="22" height="24"><path d="M5 8V5q1-4 5-3t3 3v3M8 8Q9 1 13 3t3 5" fill="none" stroke="#ddd" stroke-width="1.300"/><path d="M1 6l20 1v17L2 21z" fill="#fff"/><path d="M4 10l4-.5v4H4zM9.500 9.300l5-.8v5h-5zM4 15h4v4l-4-.5zM9.500 15h5v5l-5-.8z" fill="#070a10"/></svg></div>
    <div class="app run"><svg width="22" height="22"><circle cx="11" cy="11" r="10.500" fill="#efc13b"/><path d="M11 11L2 5Q6 0 12 .500q6 0 9 5.500z" fill="#d95040"/><path d="M11 11l-2 10.500Q2 21 .500 13T2 5l6 8z" fill="#36a252"/><circle cx="11" cy="11" r="5" fill="#f7f7f7"/><circle cx="11" cy="11" r="4" fill="#4087ed"/></svg></div>
    <div class="app run"><svg width="23" height="22"><path d="M8 1l14 2-3 16-18-3z" fill="#82b9ca"/><path d="M8 1l14 2-2 6L5 8z" fill="#d2e7ea"/><path d="M8 8l9 2-3 7-10-2z" fill="#a9d6de"/><path d="M1 16l16 3 1 2L1 18zM19 19l2-14 1-2-1 16z" fill="#446577"/></svg></div>
    <div class="app run"><svg width="24" height="24"><rect width="24" height="24" rx="3" fill="#e32d3c"/><text x="3.500" y="15.500" font-size="9" font-weight="900" fill="#fff" textLength="17" class="cjk">有道</text></svg></div>
    <div class="app run"><svg width="20" height="24"><path d="M3 1h11l4 4v17H2z" fill="#f7f7f7"/><path d="M14 1v5h4z" fill="#bbb"/><circle cx="10.500" cy="10.500" r="5" fill="#b9d4e7" stroke="#d87818" stroke-width="2.600"/><path d="M7 14l-5 7" stroke="#c66317" stroke-width="3.500"/></svg></div>
    <div class="app run full"><svg width="24" height="24"><path d="M0 0h17v6h7v18H0z" fill="#f58320"/><path d="M19 0l5 5h-5z" fill="#f58320"/><path d="M16 6Q8 2 6.500 8t4 7 6-2V9.500l-4 1" fill="none" stroke="#fff" stroke-width="2.500"/><text x="7" y="22.500" font-size="5" font-weight="bold" fill="#fff" textLength="11">PDF</text></svg></div>
    <div class="app run multi"><svg width="24" height="24"><path d="M11 1h10v9H11zM2 12h10v8H2z" fill="#a9a9a0"/><path d="M13 3h7v5h-7zM4 14h6v4H4z" fill="#0711c8"/><path d="M10 10h13v2H10zM1 20h12v3H1z" fill="#ccc"/><path d="M2 4l18 17" stroke="#111" stroke-width="4"/><path d="M1 1l4 1 1 4 15 15-1 1L6 8 2 7 0 3l3 2z" fill="#f7ea19" stroke="#f7ea19"/></svg></div>
  </div>
  <div class="tray">
    <svg width="16" height="16"><ellipse cx="7" cy="8" rx="6" ry="6" fill="#111"/><ellipse cx="7" cy="9" rx="4" ry="5" fill="#fff"/><circle cx="7" cy="4" r="3.500" fill="#111"/><circle cx="5.500" cy="3" r="1" fill="#fff"/><circle cx="8.500" cy="3" r="1" fill="#fff"/><path d="M1 7q6 3 11 0v3H2z" fill="#d82727"/><path d="M5 5h4l-2 1.500zM1 13h6v2H1z" fill="#ffb520"/><path d="M6 8h9v5h-5l-3 2v-2H6z" fill="#f6c241"/></svg>
    <svg width="16" height="16"><path d="M0 0h16v16H0z" fill="#dc3743"/><text x="2" y="12" font-size="11" font-weight="bold" fill="#fff" class="cjk">道</text><circle cx="11.500" cy="11.500" r="4" fill="#b9131e"/><path d="M9 11.500h5" stroke="#fff" stroke-width="1.500"/></svg>
    <svg width="16" height="16"><path d="M3 0h10v14H2z" fill="#e3e3e3"/><circle cx="8" cy="6" r="3.200" fill="#cbdbe5" stroke="#d87818" stroke-width="1.700"/><path d="M6 8l-4 5" stroke="#c66317" stroke-width="2.500"/></svg>
    <svg width="16" height="16"><path d="M0 0h16v16H0z" fill="#35a0f4"/><g fill="none" stroke="#fff" stroke-width="1.700"><circle cx="8" cy="6" r="2.300"/><circle cx="5" cy="9.500" r="2.200"/><circle cx="11" cy="9.500" r="2.200"/></g></svg>
    <svg width="16" height="16"><path d="M8 0q4 2 7 2v5q-1 6-7 9-6-3-7-9V2q3 0 7-2z" fill="#fff"/><path d="M8 0v16M1 7.500h14" stroke="#070a10"/></svg>
    <svg width="16" height="16"><path d="M1 12q-1-5 4-5 2-5 7-3 2 1 2 3 3 2 1 5z" fill="#fff"/><path d="M6 13q-1-4 3-4 2-3 5 0" stroke="#070a10" fill="none" stroke-width=".8"/></svg>
    <svg width="16" height="16" fill="none" stroke="#fff"><path d="M6.500 4.500h8v8H5M14.500 7h1v3h-1M1 3.500h5M2 1v3M4.500 1v3M1.500 4v3h4V4M3.500 7v5"/><path d="M8 6h5v5H8z" fill="#fff" stroke="none"/></svg>
    <svg width="16" height="16" fill="none" stroke="#fff"><path d="M6 3.500h9.500v8H3.500V8M9.500 12v3M6 15.500h7M.500 2.500h4v3h-4zM2.500 6v4"/></svg>
    <svg width="16" height="16" fill="none" stroke="#fff"><path d="M1 5.500h2L6.500 2v12L3 10.500H1zM9 5q2 3 0 6M11.500 3.500q3 4.500 0 9"/><path d="M14 2q3 6 0 12" stroke="#666"/></svg>
    <span class="ime">中</span>
    <div class="clock"><span>16:43</span><span>2017/1/13</span></div>
    <svg class="ac" width="17" height="16" fill="none" stroke="#fff" stroke-width="1.200"><path d="M.600.600h15.800v11.800H11l-2.500 2.500L6 12.400H.600z"/></svg>
    <i class="desk"></i>
  </div>
</div>
</body>
</html>
```

FILE: styles.css
```css
* { box-sizing: border-box; }
body {
  margin: 0; width: 1366px; height: 768px; overflow: hidden;
  display: flex; flex-direction: column;
  background: #efefef; color: #222;
  font: 12px/18px "Open Sans", "Noto Sans CJK SC", sans-serif;
  font-weight: 300;
  white-space: nowrap;
}
svg { display: block; flex: none; }
.defs { height: 0; width: 0; overflow: hidden; position: absolute; }
.dot { stroke: #6d7d6d; stroke-dasharray: 1 1; fill: none; }
.seal { font-family: "Liberation Sans", sans-serif; font-weight: bold; fill: #ffd800; }
.cjk { font-family: "Noto Sans CJK SC", sans-serif; }

.dn { display: block; flex: none; width: 0; height: 0; border: 3px solid transparent; border-top: 3px solid #111; border-bottom: 0; }

/* title bar */
.titlebar { height: 27px; display: grid; grid-template-columns: 260px 1fr 220px; align-items: center; font-weight: 400; }
.quick { display: flex; align-items: center; gap: 8px; padding-left: 6px; }
.quick .tight { margin-left: -5px; }
.apptitle { padding-left: 205px; letter-spacing: 0.04px; color: #444; }
.winbtns { display: flex; gap: 20px; padding-left: 13px; align-items: center; padding-bottom: 6px; }

/* menu tabs */
.tabs { height: 28px; display: flex; border-bottom: 1px solid #a9a9a9; font-size: 13px; line-height: 29px; color: #444; }
.file { width: 63px; background: #f08200; color: #fff; text-align: center; font-size: 12px; }
.tab { width: 52px; text-align: center; flex: none; }
.tab.wide { width: 78px; }
.tab.on { width: 53px; margin: 0 -1px 0 1px; height: 28px; background: #fdfdfd; border: 1px solid #a9a9a9; border-bottom: 0; color: #111; font-size: 13.500px; }
.find { flex: 1; display: flex; align-items: center; padding-left: 584px; }
.searchbox { width: 120px; height: 23px; margin-left: 4px; margin-right: 4px; border: 1px solid #a9a9a9; background: #fff; display: flex; align-items: center; justify-content: space-between; padding: 0 3px 0 4px; font-size: 12px; line-height: 20px; color: #666; }
.c1 { margin-left: 4px; } .c2 { margin-left: 9px; } .c3 { margin-left: 19px; }

/* ribbon */
.ribbon { height: 102px; display: flex; background: #fdfdfd; border-bottom: 1px solid #a9a9a9; padding-top: 3px; }
.grp { height: 95px; border-right: 1px solid #d3d3d3; display: flex; flex-direction: column; }
.cmds { display: flex; height: 77px; }
.glabel { text-align: center; color: #555; font-size: 11px; line-height: 18px; }
.big { display: flex; flex-direction: column; align-items: center; line-height: 19px; padding-top: 4px; height: 75px; flex: none; }
.big svg { margin-bottom: 1px; }
.big .dn { margin-top: 4px; }
.col { display: flex; flex-direction: column; }
.cmd { height: 23px; display: flex; align-items: center; gap: 4px; }
.cmd > .dn { margin-left: 1px; }
.g-tools { width: 167px; } .g-tools .cmds { padding-left: 4px; }
.g-tools .big { width: 42px; } .sel { background: #c3d5f2; }
.g-tools .col { padding-left: 4px; }
.g-view { width: 257px; } .g-view .cmds { padding-left: 11px; } .g-view .big { padding-top: 3px; } .g-view .big svg { margin-bottom: 2px; }
.g-view .col { padding-left: 11px; }
.g-view .col.zoomcol { padding-left: 8px; }
.zrow .combo { margin-left: 2px; }
.combo { width: 78px; height: 21px; border: 1px solid #a9a9a9; background: #fff; display: flex; justify-content: space-between; padding-left: 2px; line-height: 19px; }
.combo b { width: 14px; border: 1px solid #c5e8ce; display: flex; align-items: center; justify-content: center; }
.g-note { width: 93px; } .g-note .cmds { padding-left: 11px; } .g-note .big { width: 29px; } .g-note .big.hl { width: 32px; margin-left: 11px; }
.g-create { width: 144px; } .g-create .cmds { padding-left: 9px; } .g-create .big { width: 48px; } .g-create .col { padding-left: 9px; }
.g-sign { width: 51px; } .g-sign .big { width: 50px; padding-top: 3px; }
.g-link { width: 62px; } .g-link .cmds { padding-left: 8px; }
.g-ins { width: 103px; } .g-ins .cmds { padding-left: 8px; }
.collapse { margin: 85px 9px 0 auto; }

/* document tabs */
.doctabs { height: 32px; display: flex; border-bottom: 1px solid #a9a9a9; }
.doctab { position: relative; margin: 7px 0 0 37px; width: 194px; height: 25px; display: flex; align-items: center; padding-left: 16px; }
.doctab .shape { position: absolute; left: 0; top: 0; }
.doctab .ico, .doctab span, .doctab .x { position: relative; }
.doctab span { margin-left: 5px; width: 127px; line-height: 24px; }
.doctab .x { margin-left: 12px; margin-top: 4px; }
.more { margin: 15px 6px 0 auto; }
.translate { width: 161px; height: 31px; background: #3f691f; color: #cdf5ab; display: flex; justify-content: space-between; font: 18px/31px "DejaVu Sans Mono", monospace; padding-left: 23px; }

/* work area */
.work { height: 509px; display: flex; }
.side { width: 272px; display: flex; flex-direction: column; }
.shead { height: 25px; width: 269px; display: flex; align-items: center; justify-content: space-between; padding: 0 2px 0 37px; color: #333; border-bottom: 1px solid #a9a9a9; }
.sbody { display: flex; flex: 1; }
.rail { width: 33px; border-right: 1px solid #a9a9a9; display: flex; flex-direction: column; align-items: center; }
.cur { width: 33px; height: 46px; background: #fdfdfd; border-bottom: 1px solid #a9a9a9; border-left: 1px solid #a9a9a9; display: flex; align-items: center; justify-content: center; padding-left: 3px; }
.r1 { margin: 11px 0 0 3px; } .r2 { margin: 24px 0 0 4px; } .r3 { margin: 25px 0 0 3px; }
.panel { width: 236px; display: flex; flex-direction: column; }
.ptools { height: 27px; background: #fdfdfd; display: flex; align-items: center; gap: 18px; padding-left: 10px; }
.treewrap { height: 440px; display: flex; justify-content: space-between; }
.tree { width: 220px; background: #c7edcc; overflow: hidden; padding-left: 2px; color: #000; }
.row { display: flex; height: 18px; }
.row span { margin-left: 4px; padding: 0 1px; line-height: 19px; height: 17px; }
.row .g { width: 19px; height: 18px; }
.row .b { width: 16px; height: 18px; margin-left: 1px; }
.row .narrow { letter-spacing: -0.15px; }
.row .picked { background: #dcdcdc; }
.vbar { width: 15px; display: flex; flex-direction: column; }
.thumb { background: #cdcdcd; }
.vbar .thumb { height: 53px; }
.end { margin-top: auto; }
.hbar { height: 16px; border-top: 1px solid #fff; display: flex; width: 220px; }
.hbar .thumb { width: 121px; }
.hbar .end { margin: 0 0 0 auto; }
.splitter { width: 15px; background: #aaabad; border-right: 1px solid #444; display: flex; flex-direction: column; align-items: flex-end; }
.splitter > svg { margin: 193px 6px 0 0; }
.splitbox { border: 1px solid #707070; background: #dcdcdc; }
.splitter .splitbox { width: 9px; height: 17px; margin-top: auto; margin-right: -1px; }
.viewer { width: 1062px; }
.page { height: 492px; background: #fff; display: flex; align-items: flex-start; padding-left: 1px; overflow: hidden; }
.ops { width: 778px; margin: 76px 3px 0 19px; border-top: 2px solid #000; padding: 0 0 0 11px; color: #000; flex: none; }
.ops div { height: 27.84px; display: flex; align-items: center; }
.ops code { width: 588px; font: 15px/25px "Liberation Mono", monospace; letter-spacing: 0.63px; padding-top: 2px; }
.ops span { font: 300 16px/27px "Noto Sans CJK SC", sans-serif; }
.hbar.wide { width: 1062px; padding-left: 1px; }
.hbar.wide .thumb { width: 1019px; }
.vbar.right { width: 17px; border-left: 1px solid #fff; }
.vbar.right .splitbox { height: 9px; width: 17px; margin-left: -1px; }
.vbar.right .thumb { width: 15px; height: 17px; margin-top: 78px; }

/* status bar */
.status { height: 30px; display: flex; align-items: center; }
.pager { display: flex; align-items: center; padding-left: 552px; width: 1024px; }
.p2 { margin-left: 14px; }
.pg { margin-left: 11px; width: 115px; height: 23px; line-height: 21px; }
.p3 { margin-left: 9px; } .p4 { margin-left: 15px; } .p5 { margin-left: 11px; } .p6 { margin-left: 9px; }
.modes { display: flex; align-items: center; gap: 12px; padding-bottom: 1px; }
.m.on { width: 23px; height: 18px; background: #c3d5f2; display: flex; align-items: center; justify-content: center; margin-right: -6px; }
.zoom { display: flex; align-items: center; margin-left: 27px; color: #444; padding-bottom: 2px; }
.zoom span { width: 54px; }
.zoom > svg { margin-left: 5px; }
.zoom .sl { margin-left: 6px; }

/* taskbar */
.taskbar { height: 40px; background: #03060c; display: flex; color: #fff; }
.start { width: 48px; display: flex; align-items: center; justify-content: center; }
.ask { width: 344px; background: #333; display: flex; align-items: center; padding-left: 9px; color: #a8a8a8; font-size: 14px; }
.ask span { margin-left: 5px; }
.mic { margin-left: auto; margin-right: 15px; }
.apps { display: flex; gap: 1px; }
.app { width: 48px; height: 40px; display: flex; align-items: center; justify-content: center; }
.app.tv { margin-right: 2px; }
.app.run { background: linear-gradient(#76b9ed, #76b9ed) 50% 100% / 40px 2px no-repeat; }
.app.multi { background: linear-gradient(90deg, #76b9ed 31px, #4c7ba0 31px) 50% 100% / 40px 2px no-repeat; }
.app.full { background: linear-gradient(#76b9ed, #76b9ed) 50% 100% / 48px 2px no-repeat #343a40; }
.tray { margin-left: auto; display: flex; align-items: center; gap: 8px; }
.ime { width: 16px; font-size: 13px; text-align: center; }
.clock { width: 72px; display: flex; flex-direction: column; align-items: center; line-height: 19px; margin-left: -5px; font-weight: 400; letter-spacing: 0.2px; }
.ac { margin-left: 4px; }
.desk { width: 4px; height: 40px; border-left: 1px solid #555; margin-left: 12px; }
```
